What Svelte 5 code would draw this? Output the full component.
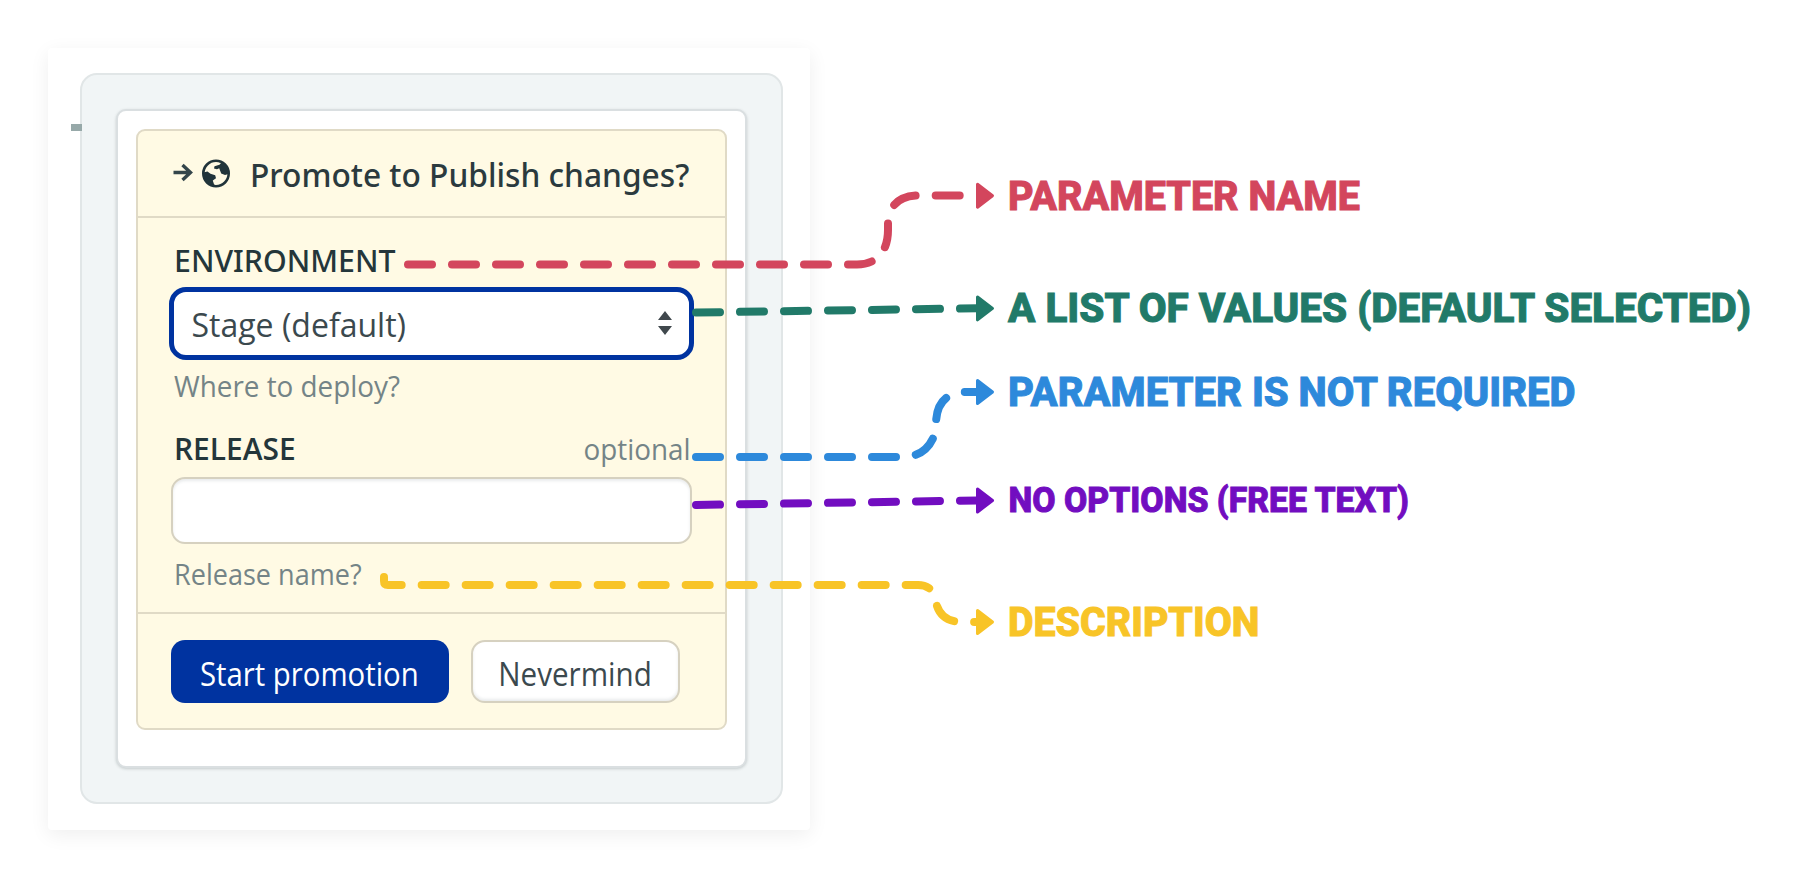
<script>
  const notes = [
    { text: 'PARAMETER NAME', color: '#d3465d', x: 1008, y: 210, size: 41, width: 352,
      path: 'M408 264.5H857C878 264.5 888 250 888 230V224C888 207 898 196 918 195.5H964', head: 195.7 },
    { text: 'A LIST OF VALUES (DEFAULT SELECTED)', color: '#217a69', x: 1008, y: 322, size: 41, width: 743,
      path: 'M696 312.5L978 308.3', head: 308.4 },
    { text: 'PARAMETER IS NOT REQUIRED', color: '#2d89db', x: 1008, y: 406, size: 41, width: 567.5,
      path: 'M696 457H904C924 457 936 440 936 425C936 405 944 392 968 392H978', head: 392 },
    { text: 'NO OPTIONS (FREE TEXT)', color: '#720dc0', x: 1008.5, y: 512, size: 35, width: 400.5,
      path: 'M696 505L978 500.4', head: 500.5 },
    { text: 'DESCRIPTION', color: '#f8c427', x: 1008, y: 636, size: 41, width: 251.5,
      path: 'M384 577V581Q384 585 388 585H918C929 585 936 592 936 602C938 613 946 622 962 622H978', head: 622 }
  ];
</script>

<main>
  <div class="frame">
    <i class="tick"></i>
    <div class="backdrop">
      <div class="sheet">
        <section class="panel">
          <header>
            <svg class="icons" width="60" height="34" viewBox="0 0 60 34">
              <path d="M1.500 16.500H18.500M10.500 9L18.500 16.500L10.500 24" fill="none" stroke="#34454a" stroke-width="3.4" />
              <circle cx="44" cy="17.500" r="12.700" fill="#fffae4" stroke="#21343a" stroke-width="2.600" />
              <path fill="#21343a" d="M45.500 5.500L49 7L47.500 8.800L42.500 10.200L42 12.500L45 13.200L47.200 12.200L49.200 17.500L53 19L56.500 18C56.800 12 53 6 45.500 5.500ZM31 16.500L35.500 15.500L38.500 17.800L43.200 19.200L44 22.200L40.800 24.500L42 28.200L44.500 30.500C37 31 30.500 24.500 31 16.500Z" />
            </svg>
            <h1>Promote to Publish changes?</h1>
          </header>
          <div class="fields">
            <div class="label"><span class="env">ENVIRONMENT</span></div>
            <div class="select">
              <span>Stage (default)</span>
              <svg width="14" height="26" viewBox="0 0 14 26" fill="#40484d"><path d="M0 10L7 1L14 10ZM0 16H14L7 25Z" /></svg>
            </div>
            <div class="help"><span class="where">Where to deploy?</span></div>
            <div class="label release"><span class="rel">RELEASE</span><span class="optional">optional</span></div>
            <div class="input"></div>
            <div class="help second"><span class="name">Release name?</span></div>
          </div>
          <footer>
            <button class="primary"><span>Start promotion</span></button>
            <button class="plain"><span>Nevermind</span></button>
          </footer>
        </section>
      </div>
    </div>
  </div>
  <svg class="notes" width="1800" height="878" viewBox="0 0 1800 878">
    {#each notes as n}
      <path d={n.path} fill="none" stroke={n.color} stroke-width="8" stroke-linecap="round" stroke-dasharray="24 20" />
      <path d="M977.500 {n.head - 11.5}L992.500 {n.head}L977.500 {n.head + 11.5}Z" fill={n.color} stroke={n.color} stroke-width="3" stroke-linejoin="round" />
      <text x={n.x} y={n.y} font-size={n.size} textLength={n.width} lengthAdjust="spacingAndGlyphs" fill={n.color} stroke={n.color}>{n.text}</text>
    {/each}
  </svg>
</main>

<style>
  :global(body) { margin: 0; background: #fff; }
  main { position: relative; width: 1800px; height: 878px; overflow: hidden; background: #fff; box-sizing: border-box; padding: 48px; font-family: "Open Sans", "Noto Sans", sans-serif; color: #2c3e43; }
  main * { box-sizing: border-box; }
  .frame { position: relative; width: 762px; height: 782px; padding: 24.5px 27px 0 32px; border-radius: 4px; background: #fff; box-shadow: 0 5px 20px rgba(0, 0, 0, .065); }
  .tick { position: absolute; z-index: 1; left: 23px; top: 76px; width: 11px; height: 7px; background: #97a9a9; }
  .backdrop { height: 731px; padding: 34px 35px 34px 34px; border: 2px solid #e1e6e7; border-radius: 17px; background: #f1f5f6; }
  .sheet { width: 631px; height: 659px; padding: 18px 17.500px; border: 2px solid #dadfe1; border-radius: 10px; background: #fff; box-shadow: 0 1px 3px rgba(40, 60, 60, .22); }
  .panel { width: 591px; height: 601px; border: 2px solid #e0dac6; border-radius: 9px; background: #fffae4; display: flex; flex-direction: column; }
  header { height: 87px; flex: none; display: flex; align-items: center; gap: 18px; padding-left: 34px; border-bottom: 2px solid #e0dac6; }
  .icons { flex: none; margin-top: -1px; }
  h1 { margin: 4px 0 0; font: 500 33px/44px "Noto Sans", sans-serif; white-space: nowrap; transform: scaleX(.96); transform-origin: 0 50%; color: #2b3a3e; }
  .fields { height: 396px; flex: none; padding: 23.500px 33px 0 33px; border-bottom: 2px solid #e0dac6; }
  .label { height: 36px; display: flex; justify-content: space-between; line-height: 38px; padding: 0 1px 0 3px; font-size: 31px; color: #24363a; }
  .label span, .help span, button span { display: inline-block; white-space: nowrap; transform-origin: 0 50%; }
  .env { font-family: "Noto Sans", sans-serif; font-weight: 500; transform: scaleX(.978); }
  .select { margin: 9.500px -2px 0; height: 73px; border: 5px solid #0033a0; border-radius: 17px; background: #fff; display: flex; align-items: center; justify-content: space-between; padding: 0 17px 0 18px; font-size: 32px; line-height: 40px; color: #3b494e; }
  .select span { padding-top: 3px; }
  .help { height: 32px; margin-top: 9px; padding-left: 3px; font-size: 29px; line-height: 34px; color: #748487; }
  .where { transform: scaleX(.96); }
  .release { margin-top: 28px; }
  .rel { font-weight: 600; transform: scaleX(.965); }
  .label .optional { font-size: 29px; line-height: 40px; transform: scaleX(.96); transform-origin: 100% 50%; color: #748487; }
  .input { margin-top: 12px; height: 67px; border: 2px solid #d6d1c0; border-radius: 14px; background: #fff; box-shadow: inset 0 2px 3px rgba(40, 60, 70, .1); }
  .second { margin-top: 13px; }
  .name { transform: scaleX(.933); }
  footer { flex: 1; display: flex; align-items: flex-start; gap: 22px; padding: 26px 0 0 33px; }
  button { height: 63px; padding: 0; border-radius: 14px; font: 400 32px/40px "Open Sans", sans-serif; display: flex; align-items: center; justify-content: center; }
  button span { padding-top: 5px; transform-origin: 50% 50%; }
  .primary { width: 278px; border: 0; background: #0033a0; color: #fff; }
  .primary span { transform: scaleX(.917); }
  .plain { width: 209px; border: 2px solid #d6d1c0; background: #fff; color: #3b494e; box-shadow: inset 0 -2px 3px rgba(40, 60, 70, .1); }
  .plain span { transform: scaleX(.925); }
  .notes { position: absolute; left: 0; top: 0; }
  .notes text { font-family: Roboto, sans-serif; font-weight: 800; stroke-width: 1px; }
</style>
